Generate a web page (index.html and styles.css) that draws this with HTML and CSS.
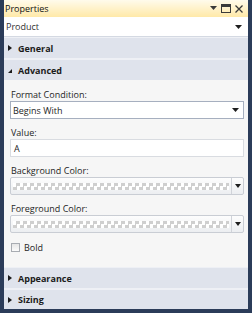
FILE: index.html
```html
<!DOCTYPE html>
<html>
<head>
<meta charset="utf-8">
<link rel="stylesheet" href="styles.css">
</head>
<body>
<div class="window">
  <div class="titlebar">
    <span class="title">Properties</span>
    <div class="title-icons">
      <svg width="7" height="5" viewBox="0 0 7 5"><path d="M0 0h7L3.5 4z" fill="#3a3a3a"/></svg>
      <svg width="10" height="9" viewBox="0 0 10 9"><rect x="0.5" y="0.5" width="9" height="8" fill="none" stroke="#3a3a3a"/><rect x="0" y="0" width="10" height="3" fill="#3a3a3a"/></svg>
      <svg width="8" height="8" viewBox="0 0 8 8"><path d="M0.5 0.5l7 7M7.5 0.5l-7 7" stroke="#3a3a3a" stroke-width="1.3"/></svg>
    </div>
  </div>
  <div class="object-combo">
    <span>Product</span>
    <svg width="7" height="4" viewBox="0 0 7 4"><path d="M0 0h7L3.5 4z" fill="#1e1e1e"/></svg>
  </div>
  <div class="section-header"><span class="tri-right"></span>General</div>
  <div class="section-header"><span class="tri-down"></span>Advanced</div>
  <div class="content">
    <div class="field">
      <div class="label">Format Condition:</div>
      <div class="select">
        <span>Begins With</span>
        <svg width="7" height="4" viewBox="0 0 7 4"><path d="M0 0h7L3.5 4z" fill="#1e1e1e"/></svg>
      </div>
    </div>
    <div class="field">
      <div class="label">Value:</div>
      <div class="textbox">A</div>
    </div>
    <div class="field">
      <div class="label">Background Color:</div>
      <div class="colorpick">
        <div class="checker"></div>
        <div class="cbtn"><svg width="6" height="4" viewBox="0 0 6 4"><path d="M0 0h6L3 4z" fill="#1e1e1e"/></svg></div>
      </div>
    </div>
    <div class="field">
      <div class="label">Foreground Color:</div>
      <div class="colorpick">
        <div class="checker"></div>
        <div class="cbtn"><svg width="6" height="4" viewBox="0 0 6 4"><path d="M0 0h6L3 4z" fill="#1e1e1e"/></svg></div>
      </div>
    </div>
    <div class="check-row">
      <span class="checkbox"></span>
      <span>Bold</span>
    </div>
  </div>
  <div class="section-header"><span class="tri-right"></span>Appearance</div>
  <div class="section-header last"><span class="tri-right"></span>Sizing</div>
</div>
</body>
</html>
```

FILE: styles.css
```css
html, body {
  margin: 0;
  padding: 0;
  background: #2b3c59;
}
.window {
  width: 244px;
  height: 309px;
  border: 4px solid #2b3c59;
  border-top: 0;
  background: #eef0f5;
  display: flex;
  flex-direction: column;
  font-family: "Open Sans", "Noto Sans", sans-serif;
  font-size: 9px;
  color: #1e1e1e;
}
.titlebar {
  height: 17px;
  flex: none;
  background: linear-gradient(#fffbec, #ffe9a8);
  display: flex;
  align-items: center;
  justify-content: space-between;
  padding: 0 5px 0 1px;
}
.title {
  font-size: 9px;
  color: #111;
}
.title-icons {
  display: flex;
  align-items: center;
  gap: 4px;
}
.object-combo {
  height: 19px;
  flex: none;
  background: #fff;
  border-bottom: 1px solid #d4d9e2;
  display: flex;
  align-items: center;
  justify-content: space-between;
  padding: 0 6px 0 2px;
  color: #333;
}
.section-header {
  height: 20px;
  flex: none;
  background: #dfe3ec;
  margin-top: 1px;
  display: flex;
  align-items: center;
  font-weight: bold;
  font-size: 9px;
  color: #1b1b1b;
}
.section-header + .section-header {
  margin-top: 2px;
}
.section-header.last {
  height: 19px;
}
.tri-right {
  width: 0;
  height: 0;
  border-left: 4px solid #1b1b1b;
  border-top: 3px solid transparent;
  border-bottom: 3px solid transparent;
  margin: 0 6px 0 4px;
}
.tri-down {
  width: 0;
  height: 0;
  border-right: 4px solid #1b1b1b;
  border-top: 4px solid transparent;
  margin: 1px 6px 0 4px;
}
.content {
  flex: 1;
  background: #f6f6f6;
  padding: 8px 4px 0 6px;
  display: flex;
  flex-direction: column;
  gap: 7px;
}
.label {
  line-height: 13px;
  padding-left: 1px;
  color: #1e1e1e;
}
.select {
  height: 16px;
  border: 1px solid #a6afbf;
  background: #fff;
  display: flex;
  align-items: center;
  justify-content: space-between;
  padding: 0 4px 0 2px;
}
.textbox {
  height: 16px;
  border: 1px solid #d9dce1;
  background: #fff;
  display: flex;
  align-items: center;
  padding: 0 3px;
}
.colorpick {
  height: 16px;
  border: 1px solid #c9cdd4;
  border-radius: 2px;
  background: linear-gradient(#fdfdfd, #eceef1);
  display: flex;
  align-items: center;
  padding-left: 2px;
}
.checker {
  flex: 1;
  height: 7px;
  background-color: #fff;
  background-image: repeating-conic-gradient(#cfcfcf 0 25%, #fff 0 50%);
  background-size: 7px 7px;
}
.cbtn {
  width: 11px;
  height: 16px;
  border-left: 1px solid #d0d3d9;
  margin-left: 2px;
  display: flex;
  align-items: center;
  justify-content: center;
}
.check-row {
  display: flex;
  align-items: center;
  gap: 4px;
  margin-top: 1px;
  padding-left: 1px;
}
.checkbox {
  width: 7px;
  height: 7px;
  border: 1px solid #a8acb2;
  background: linear-gradient(#e6e6e6, #fbfbfb);
}
```
